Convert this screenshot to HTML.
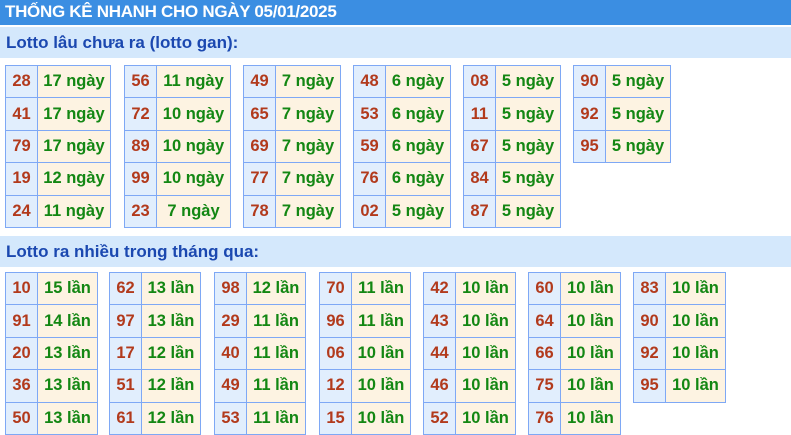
<!DOCTYPE html>
<html><head><meta charset="utf-8"><style>
body{margin:0;width:791px;height:435px;overflow:hidden;background:#fff;font-family:"Liberation Sans",Arial,sans-serif;position:relative}
.hd{position:absolute;left:0;top:0;width:791px;height:25px;background:#3b8ee2;color:#fff;font-weight:bold;font-size:17px;line-height:24px;padding-left:5px;box-sizing:border-box;letter-spacing:-0.3px}
.sec{position:absolute;left:0;width:791px;height:31px;background:#d4e8fc;color:#1b48b0;font-weight:bold;font-size:17px;line-height:31px;padding-left:6px;box-sizing:border-box}
table{position:absolute;border-collapse:collapse;font-weight:bold;font-size:16.5px}
td{border:1px solid #7ea8f5;height:31.4px;padding:0;text-align:center}
td.n{background:#e1eefd;color:#b23a1c;width:31px}
td.v{background:#fdf3e2;color:#138713}
</style></head><body>
<div class="hd">THỐNG KÊ NHANH CHO NGÀY 05/01/2025</div>
<div class="sec" style="top:27px">Lotto lâu chưa ra (lotto gan):</div>
<table style="left:5px;top:65px;width:106px"><tr><td class="n">28</td><td class="v">17 ngày</td></tr><tr><td class="n">41</td><td class="v">17 ngày</td></tr><tr><td class="n">79</td><td class="v">17 ngày</td></tr><tr><td class="n">19</td><td class="v">12 ngày</td></tr><tr><td class="n">24</td><td class="v">11 ngày</td></tr></table>
<table style="left:124px;top:65px;width:107px"><tr><td class="n">56</td><td class="v">11 ngày</td></tr><tr><td class="n">72</td><td class="v">10 ngày</td></tr><tr><td class="n">89</td><td class="v">10 ngày</td></tr><tr><td class="n">99</td><td class="v">10 ngày</td></tr><tr><td class="n">23</td><td class="v">7 ngày</td></tr></table>
<table style="left:243px;top:65px;width:98px"><tr><td class="n">49</td><td class="v">7 ngày</td></tr><tr><td class="n">65</td><td class="v">7 ngày</td></tr><tr><td class="n">69</td><td class="v">7 ngày</td></tr><tr><td class="n">77</td><td class="v">7 ngày</td></tr><tr><td class="n">78</td><td class="v">7 ngày</td></tr></table>
<table style="left:353px;top:65px;width:98px"><tr><td class="n">48</td><td class="v">6 ngày</td></tr><tr><td class="n">53</td><td class="v">6 ngày</td></tr><tr><td class="n">59</td><td class="v">6 ngày</td></tr><tr><td class="n">76</td><td class="v">6 ngày</td></tr><tr><td class="n">02</td><td class="v">5 ngày</td></tr></table>
<table style="left:463px;top:65px;width:98px"><tr><td class="n">08</td><td class="v">5 ngày</td></tr><tr><td class="n">11</td><td class="v">5 ngày</td></tr><tr><td class="n">67</td><td class="v">5 ngày</td></tr><tr><td class="n">84</td><td class="v">5 ngày</td></tr><tr><td class="n">87</td><td class="v">5 ngày</td></tr></table>
<table style="left:573px;top:65px;width:98px"><tr><td class="n">90</td><td class="v">5 ngày</td></tr><tr><td class="n">92</td><td class="v">5 ngày</td></tr><tr><td class="n">95</td><td class="v">5 ngày</td></tr></table>
<div class="sec" style="top:236px">Lotto ra nhiều trong tháng qua:</div>
<table style="left:5px;top:272px;width:93px"><tr><td class="n">10</td><td class="v">15 lần</td></tr><tr><td class="n">91</td><td class="v">14 lần</td></tr><tr><td class="n">20</td><td class="v">13 lần</td></tr><tr><td class="n">36</td><td class="v">13 lần</td></tr><tr><td class="n">50</td><td class="v">13 lần</td></tr></table>
<table style="left:109px;top:272px;width:92px"><tr><td class="n">62</td><td class="v">13 lần</td></tr><tr><td class="n">97</td><td class="v">13 lần</td></tr><tr><td class="n">17</td><td class="v">12 lần</td></tr><tr><td class="n">51</td><td class="v">12 lần</td></tr><tr><td class="n">61</td><td class="v">12 lần</td></tr></table>
<table style="left:214px;top:272px;width:92px"><tr><td class="n">98</td><td class="v">12 lần</td></tr><tr><td class="n">29</td><td class="v">11 lần</td></tr><tr><td class="n">40</td><td class="v">11 lần</td></tr><tr><td class="n">49</td><td class="v">11 lần</td></tr><tr><td class="n">53</td><td class="v">11 lần</td></tr></table>
<table style="left:319px;top:272px;width:92px"><tr><td class="n">70</td><td class="v">11 lần</td></tr><tr><td class="n">96</td><td class="v">11 lần</td></tr><tr><td class="n">06</td><td class="v">10 lần</td></tr><tr><td class="n">12</td><td class="v">10 lần</td></tr><tr><td class="n">15</td><td class="v">10 lần</td></tr></table>
<table style="left:423px;top:272px;width:93px"><tr><td class="n">42</td><td class="v">10 lần</td></tr><tr><td class="n">43</td><td class="v">10 lần</td></tr><tr><td class="n">44</td><td class="v">10 lần</td></tr><tr><td class="n">46</td><td class="v">10 lần</td></tr><tr><td class="n">52</td><td class="v">10 lần</td></tr></table>
<table style="left:528px;top:272px;width:93px"><tr><td class="n">60</td><td class="v">10 lần</td></tr><tr><td class="n">64</td><td class="v">10 lần</td></tr><tr><td class="n">66</td><td class="v">10 lần</td></tr><tr><td class="n">75</td><td class="v">10 lần</td></tr><tr><td class="n">76</td><td class="v">10 lần</td></tr></table>
<table style="left:633px;top:272px;width:93px"><tr><td class="n">83</td><td class="v">10 lần</td></tr><tr><td class="n">90</td><td class="v">10 lần</td></tr><tr><td class="n">92</td><td class="v">10 lần</td></tr><tr><td class="n">95</td><td class="v">10 lần</td></tr></table>
</body></html>
